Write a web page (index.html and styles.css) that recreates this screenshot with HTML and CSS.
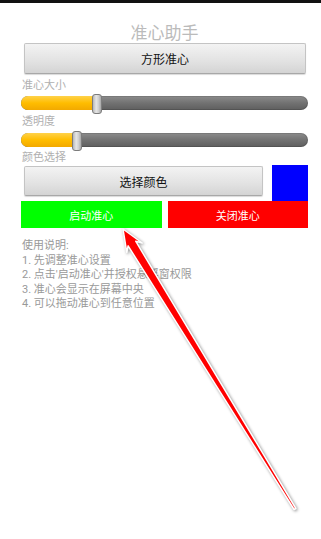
FILE: index.html
```html
<!DOCTYPE html>
<html lang="zh">
<head>
<meta charset="utf-8">
<title>准心助手</title>
<link rel="stylesheet" href="styles.css">
</head>
<body>
<div class="status"></div>
<main class="app">
  <h1 class="title">准心助手</h1>
  <button class="btn btn-shape">方形准心</button>
  <div class="label label-first">准心大小</div>
  <div class="slider slider-size">
    <div class="track"><div class="fill" style="width:75px"></div></div>
    <div class="thumb" style="left:71px"></div>
  </div>
  <div class="label">透明度</div>
  <div class="slider slider-alpha">
    <div class="track"><div class="fill" style="width:54px"></div></div>
    <div class="thumb" style="left:51px"></div>
  </div>
  <div class="label label-color">颜色选择</div>
  <div class="color-row">
    <button class="btn btn-color">选择颜色</button>
    <div class="swatch"></div>
  </div>
  <div class="actions">
    <button class="act act-start">启动准心</button>
    <button class="act act-stop">关闭准心</button>
  </div>
  <div class="help">
    <div>使用说明:</div>
    <div>1. 先调整准心设置</div>
    <div>2. 点击'启动准心'并授权悬浮窗权限</div>
    <div>3. 准心会显示在屏幕中央</div>
    <div>4. 可以拖动准心到任意位置</div>
  </div>
</main>
<svg class="arrow" width="321" height="539" viewBox="0 0 321 539">
  <polygon points="123,229 142.2,243 135.7,241.2 295.9,508.5 294.1,509.5 128.1,245.9 126.8,252.4" />
</svg>
</body>
</html>
```
FILE: styles.css
```css
html, body {
  margin: 0;
  padding: 0;
  background: #fff;
}
body {
  width: 321px;
  height: 539px;
  overflow: hidden;
  position: relative;
  font-family: Roboto, "Noto Sans CJK SC", sans-serif;
}
.status {
  height: 3px;
  background: #111;
}
.app {
  padding: 0 13px 0 21px;
  display: flex;
  flex-direction: column;
}
.title {
  margin: 0;
  padding-top: 20px;
  font-size: 17px;
  line-height: 20px;
  font-weight: normal;
  text-align: center;
  color: #bbbbbb;
}
.btn {
  display: block;
  font-family: inherit;
  font-size: 12px;
  color: #111;
  background: linear-gradient(#f3f3f3, #e2e2e2 60%, #d4d4d4);
  border: 1px solid #c4c4c4;
  border-bottom-color: #a8a8a8;
  border-radius: 2px;
  box-shadow: 0 1px 1px rgba(0,0,0,0.15);
  padding: 0;
}
.btn-shape {
  height: 31px;
  margin: 0 2px 0 3px;
}
.label {
  font-size: 11px;
  line-height: 14px;
  color: #b0b0b0;
  margin-top: 1px;
  padding-left: 1px;
}
.label-first {
  margin-top: 5px;
}
.label-color {
  margin-top: 0;
}
.slider {
  position: relative;
  height: 20px;
  margin-top: 1px;
}
.slider-alpha {
  margin-top: 2px;
}
.track {
  margin-top: 2px;
  height: 14px;
  border-radius: 7px;
  background: linear-gradient(#8c8c8c, #727272 50%, #5e5e5e);
  box-shadow: inset 0 0 0 1px rgba(0,0,0,0.12);
  overflow: hidden;
}
.fill {
  height: 100%;
  background: linear-gradient(#ffd24a, #ffbd00 50%, #f2a900);
}
.thumb {
  position: absolute;
  top: 0;
  width: 10px;
  height: 20px;
  box-sizing: border-box;
  border: 1px solid #7c7c7c;
  border-radius: 3px;
  background: linear-gradient(90deg, #b8b8b8, #e6e6e6 40%, #cfcfcf 70%, #a8a8a8);
}
.color-row {
  display: flex;
  height: 36px;
}
.btn-color {
  flex: 1;
  height: 30px;
  margin: 1px 9px 0 3px;
}
.swatch {
  width: 36px;
  height: 37px;
  background: #0000ff;
}
.actions {
  display: grid;
  grid-template-columns: 1fr 1fr;
  gap: 6px;
  height: 27px;
  position: relative;
}
.act {
  border: 0;
  padding: 0;
  font-family: inherit;
  font-size: 11px;
  color: #fff;
}
.act-start {
  background: #00ff00;
}
.act-stop {
  background: #ff0000;
}
.help {
  padding-top: 11px;
  padding-left: 1px;
  font-size: 11px;
  line-height: 14.5px;
  color: #999999;
}
.arrow {
  position: absolute;
  left: 0;
  top: 0;
  pointer-events: none;
  overflow: visible;
}
.arrow polygon {
  fill: #ff0000;
  stroke: #ffffff;
  stroke-width: 1.5;
  stroke-linejoin: round;
  filter: drop-shadow(1px 1px 1.5px rgba(0,0,0,0.45));
}
```
